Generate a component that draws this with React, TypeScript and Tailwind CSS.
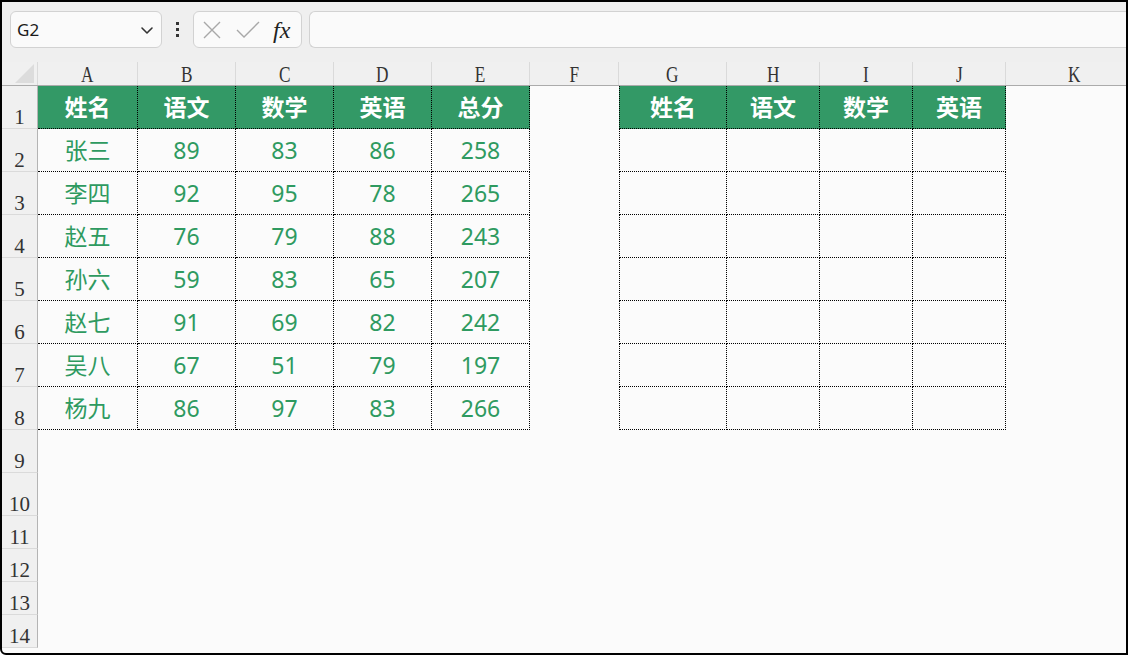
import React from 'react';

const cols = [
  { key: 'A', w: 'w-[100px]' },
  { key: 'B', w: 'w-[98px]' },
  { key: 'C', w: 'w-[98px]' },
  { key: 'D', w: 'w-[98px]' },
  { key: 'E', w: 'w-[98px]' },
  { key: 'F', w: 'w-[89px]' },
  { key: 'G', w: 'w-[108px]' },
  { key: 'H', w: 'w-[93px]' },
  { key: 'I', w: 'w-[93px]' },
  { key: 'J', w: 'w-[93px]' },
  { key: 'K', w: 'w-[138px]' },
];

const scores: string[][] = [
  ['张三', '89', '83', '86', '258'],
  ['李四', '92', '95', '78', '265'],
  ['赵五', '76', '79', '88', '243'],
  ['孙六', '59', '83', '65', '207'],
  ['赵七', '91', '69', '82', '242'],
  ['吴八', '67', '51', '79', '197'],
  ['杨九', '86', '97', '83', '266'],
];

const leftHead = ['姓名', '语文', '数学', '英语', '总分'];
const rightHead = ['姓名', '语文', '数学', '英语'];

const cjk = "font-['Noto_Sans','Noto_Sans_CJK_SC',sans-serif]";
const serif = "font-['Liberation_Serif','Noto_Serif_CJK_SC',serif]";

function RowHead({ n, h }: { n: number; h: string }) {
  return (
    <div
      className={`${h} w-[36px] shrink-0 bg-[#f0f0f0] border-r border-b border-r-[#b4b4b4] border-b-[#dadada] flex items-end justify-center text-[21px] leading-[21px] text-[#333] ${serif}`}
    >
      {n}
    </div>
  );
}

function SheetRow({ n, cells }: { n: number; cells: (string | null)[] }) {
  // A..E = 0..4, G..J = 6..9
  const h = n <= 10 ? 'h-[43px]' : 'h-[33px]';
  const header = n === 1;
  const inTable = n <= 8;
  return (
    <div className="flex">
      <RowHead n={n} h={h} />
      {cols.map((c, i) => {
        const left = i <= 4;
        const right = i >= 6 && i <= 9;
        const table = inTable && (left || right);
        const text = cells[i] ?? '';
        let cls = `${c.w} ${h} shrink-0 flex items-center justify-center ${cjk}`;
        if (table) {
          cls += ' border-r border-b border-dotted border-black';
          if (i === 6) cls += ' border-l';
          if (header) cls += ' bg-[#339966] text-white font-bold text-[23px]';
          else cls += ' text-[#2e9a60] text-[23px]';
        }
        return (
          <div key={c.key} className={cls}>
            {text}
          </div>
        );
      })}
    </div>
  );
}

function FormulaBar() {
  return (
    <div className="h-[60px] bg-[#efefef] flex items-start pt-[9px] pl-[8px]">
      <div className="w-[152px] h-[37px] rounded-md border border-[#d2d2d2] bg-[#fafafa] flex items-center justify-between pl-[6px] pr-[7px]">
        <span className="text-[17px] text-[#1a1a1a] font-['Noto_Sans',sans-serif]">G2</span>
        <svg width="14" height="14" viewBox="0 0 14 14" fill="none" stroke="#333" strokeWidth="1.6">
          <path d="M2 5l5 5 5-5" strokeLinecap="round" strokeLinejoin="round" />
        </svg>
      </div>
      <div className="w-[31px] h-[37px] flex flex-col items-center justify-center gap-[3px]">
        <span className="w-[3px] h-[3px] bg-[#333]" />
        <span className="w-[3px] h-[3px] bg-[#333]" />
        <span className="w-[3px] h-[3px] bg-[#333]" />
      </div>
      <div className="w-[109px] h-[37px] rounded-md border border-[#d2d2d2] bg-[#fafafa] flex items-center pl-[7px] gap-[12px]">
        <svg width="22" height="22" viewBox="0 0 22 22" fill="none" stroke="#a8a8a8" strokeWidth="1.4">
          <path d="M3 3l16 16M19 3L3 19" />
        </svg>
        <svg width="26" height="22" viewBox="0 0 26 22" fill="none" stroke="#a8a8a8" strokeWidth="1.4">
          <path d="M2 11l7 7L24 3" />
        </svg>
        <span className={`italic text-[24px] leading-none text-[#222] ${serif}`}>fx</span>
      </div>
      <div className="ml-[7px] flex-1 h-[37px] rounded-l-md border border-r-0 border-[#d2d2d2] bg-[#fafafa]" />
    </div>
  );
}

function ColumnHeader() {
  return (
    <div className="flex h-[24px] bg-[#f0f0f0] border-b border-[#ababab]">
      <div className="w-[36px] shrink-0 border-r border-[#dadada] relative">
        <div className="absolute right-[3px] bottom-[2px] w-0 h-0 border-l-[19px] border-l-transparent border-b-[19px] border-b-[#dcdcdc]" />
      </div>
      {cols.map((c) => (
        <div
          key={c.key}
          className={`${c.w} shrink-0 border-r border-[#dadada] flex items-center justify-center text-[#333] ${serif}`}
        >
          <span className="inline-block scale-x-[0.75] text-[23px] leading-none pt-[2px]">{c.key}</span>
        </div>
      ))}
    </div>
  );
}

export default function App() {
  const rows: { n: number; cells: (string | null)[] }[] = [];
  rows.push({ n: 1, cells: [...leftHead, null, ...rightHead, null] });
  scores.forEach((r, i) => rows.push({ n: i + 2, cells: [...r] }));
  for (let n = 9; n <= 14; n++) rows.push({ n, cells: [] });

  return (
    <div className="w-[1129px] h-[656px] overflow-hidden bg-white">
      <div className="w-[1128px] h-[655px] border-2 border-black rounded-bl-md overflow-hidden bg-[#fbfbfb] flex flex-col">
        <FormulaBar />
        <ColumnHeader />
        {rows.map((r) => (
          <SheetRow key={r.n} n={r.n} cells={r.cells} />
        ))}
      </div>
    </div>
  );
}
